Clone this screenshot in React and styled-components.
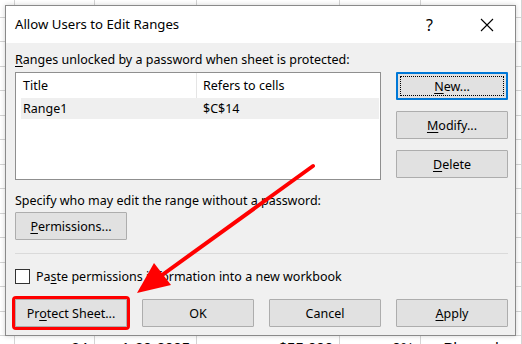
import styled, { createGlobalStyle } from "styled-components";

const GlobalStyle = createGlobalStyle`
  html, body {
    margin: 0;
    padding: 0;
  }
  body {
    width: 522px;
    height: 344px;
    overflow: hidden;
    background: #fff;
    font-family: "Noto Sans", "Open Sans", sans-serif;
    color: #000;
  }
`;

const Screen = styled.div`
  position: relative;
  width: 522px;
  height: 344px;
  overflow: hidden;
`;

const Sheet = styled.div`
  display: flex;
  flex-direction: column;
`;

const SheetRow = styled.div`
  display: grid;
  grid-template-columns: 15px 80px 102px 143px 81px 101px;
  height: ${(p) => p.h}px;
  flex-shrink: 0;
`;

const Cell = styled.div`
  box-sizing: border-box;
  border-right: 1px solid #d4d4d4;
  border-bottom: 1px solid #d4d4d4;
  font-family: "Liberation Sans", Arial, sans-serif;
  font-size: 15px;
  line-height: 17px;
  padding: 3px 6px 0;
  text-align: ${(p) => p.align || "left"};
  white-space: nowrap;
  overflow: hidden;
`;

const Dialog = styled.div`
  position: absolute;
  left: 5px;
  top: 5px;
  width: 511px;
  height: 331px;
  box-sizing: border-box;
  border: 1px solid #8a8a8a;
  background: #f0f0f0;
  box-shadow: 0 0 5px rgba(0, 0, 0, 0.18);
  display: flex;
  flex-direction: column;
`;

const TitleBar = styled.div`
  height: 37px;
  background: #fff;
  display: flex;
  align-items: center;
  padding-left: 9px;
`;

const Title = styled.div`
  flex: 1;
  font-size: 13.2px;
  padding-bottom: 2px;
`;

const TitleButton = styled.div`
  width: 57px;
  height: 37px;
  display: flex;
  align-items: center;
  justify-content: center;
  font-size: 16px;
`;

const Body = styled.div`
  padding: 8px 7px 0 9px;
  display: flex;
  flex-direction: column;
  font-size: 12.5px;
`;

const Label = styled.div`
  height: 18px;
  line-height: 18px;
  margin-top: ${(p) => p.top || 0}px;
  white-space: nowrap;
`;

const Key = styled.span`
  text-decoration: underline;
  text-underline-offset: 2px;
`;

const TopRow = styled.div`
  display: flex;
  gap: 15px;
  margin-top: 3px;
`;

const List = styled.div`
  box-sizing: border-box;
  width: 366px;
  height: 108px;
  background: #fff;
  border: 1px solid #8f8f8f;
`;

const ListHeader = styled.div`
  display: grid;
  grid-template-columns: 181px 1fr;
  height: 25px;
  line-height: 25px;
`;

const HeaderCell = styled.div`
  padding-left: ${(p) => p.pad}px;
  border-right: ${(p) => (p.divider ? "1px solid #e5e5e5" : "none")};
`;

const ListRow = styled.div`
  display: grid;
  grid-template-columns: 176px 1fr;
  height: 21px;
  line-height: 21px;
  margin: 0 1px 0 5px;
  background: ${(p) => (p.selected ? "#efefef" : "transparent")};
`;

const RowCell = styled.div`
  padding-left: ${(p) => p.pad}px;
`;

const ButtonColumn = styled.div`
  display: flex;
  flex-direction: column;
  gap: 11px;
`;

const Button = styled.div`
  position: relative;
  box-sizing: border-box;
  width: 112px;
  height: 28px;
  margin-top: ${(p) => p.top || 0}px;
  display: flex;
  align-items: center;
  justify-content: center;
  background: #e1e1e1;
  border: ${(p) => (p.focused ? "2px solid #0078d7" : "1px solid #adadad")};
  border-radius: 1px;
  white-space: nowrap;
  outline: ${(p) => (p.marked ? "3px solid #ff0000" : "none")};
  outline-offset: 0px;

  &::after {
    content: "";
    display: ${(p) => (p.focused ? "block" : "none")};
    position: absolute;
    inset: 2px;
    border: 1px dotted #000;
  }
`;

const Separator = styled.div`
  height: 1px;
  background: #dadada;
  margin-top: 13px;
`;

const CheckRow = styled.div`
  display: flex;
  align-items: center;
  gap: 6px;
  margin-top: 14px;
  height: 16px;
`;

const Checkbox = styled.div`
  box-sizing: border-box;
  width: 15px;
  height: 15px;
  background: #fff;
  border: 1px solid #333;
`;

const BottomRow = styled.div`
  display: flex;
  justify-content: space-between;
  width: 493px;
  margin-top: 15px;
`;

const Overlay = styled.svg`
  position: absolute;
  left: 0;
  top: 0;
  pointer-events: none;
`;

const rowHeights = [18, 24, 25, 24, 25, 24, 25, 24, 25, 24, 25, 24, 25, 24, 20];
const lastRow = ["", "24", "1-20-2005", "$55,000", "0%", "Planned"];
const lastAlign = ["left", "right", "right", "right", "right", "center"];

export default function App() {
  return (
    <Screen>
      <GlobalStyle />
      <Sheet>
        {rowHeights.map((h, r) => {
          const last = r === rowHeights.length - 1;
          return (
            <SheetRow key={r} h={h}>
              {lastRow.map((text, c) => (
                <Cell key={c} align={lastAlign[c]}>
                  {last ? text : ""}
                </Cell>
              ))}
            </SheetRow>
          );
        })}
      </Sheet>

      <Dialog>
        <TitleBar>
          <Title>Allow Users to Edit Ranges</Title>
          <TitleButton>?</TitleButton>
          <TitleButton>
            <svg width="14" height="14" viewBox="0 0 14 14">
              <path d="M1 1L13 13M13 1L1 13" stroke="#000" strokeWidth="1.1" />
            </svg>
          </TitleButton>
        </TitleBar>

        <Body>
          <Label>
            <Key>R</Key>anges unlocked by a password when sheet is protected:
          </Label>
          <TopRow>
            <List>
              <ListHeader>
                <HeaderCell pad={7} divider>Title</HeaderCell>
                <HeaderCell pad={6}>Refers to cells</HeaderCell>
              </ListHeader>
              <ListRow selected>
                <RowCell pad={2}>Range1</RowCell>
                <RowCell pad={6}>$C$14</RowCell>
              </ListRow>
            </List>
            <ButtonColumn>
              <Button focused>
                <span><Key>N</Key>ew...</span>
              </Button>
              <Button>
                <span><Key>M</Key>odify...</span>
              </Button>
              <Button>
                <span><Key>D</Key>elete</span>
              </Button>
            </ButtonColumn>
          </TopRow>

          <Label top={12}>Specify who may edit the range without a password:</Label>
          <Button top={2}>
            <span><Key>P</Key>ermissions...</span>
          </Button>

          <Separator />

          <CheckRow>
            <Checkbox />
            <span>Pa<Key>s</Key>te permissions information into a new workbook</span>
          </CheckRow>

          <BottomRow>
            <Button marked>
              <span>Pr<Key>o</Key>tect Sheet...</span>
            </Button>
            <Button>OK</Button>
            <Button>Cancel</Button>
            <Button>
              <span><Key>A</Key>pply</span>
            </Button>
          </BottomRow>
        </Body>
      </Dialog>

      <Overlay width="522" height="344" viewBox="0 0 522 344">
        <line x1="313" y1="166" x2="158" y2="278" stroke="#ff0000" strokeWidth="4" strokeLinecap="round" />
        <polygon points="137,293 154,263 171,285" fill="#ff0000" />
      </Overlay>
    </Screen>
  );
}
